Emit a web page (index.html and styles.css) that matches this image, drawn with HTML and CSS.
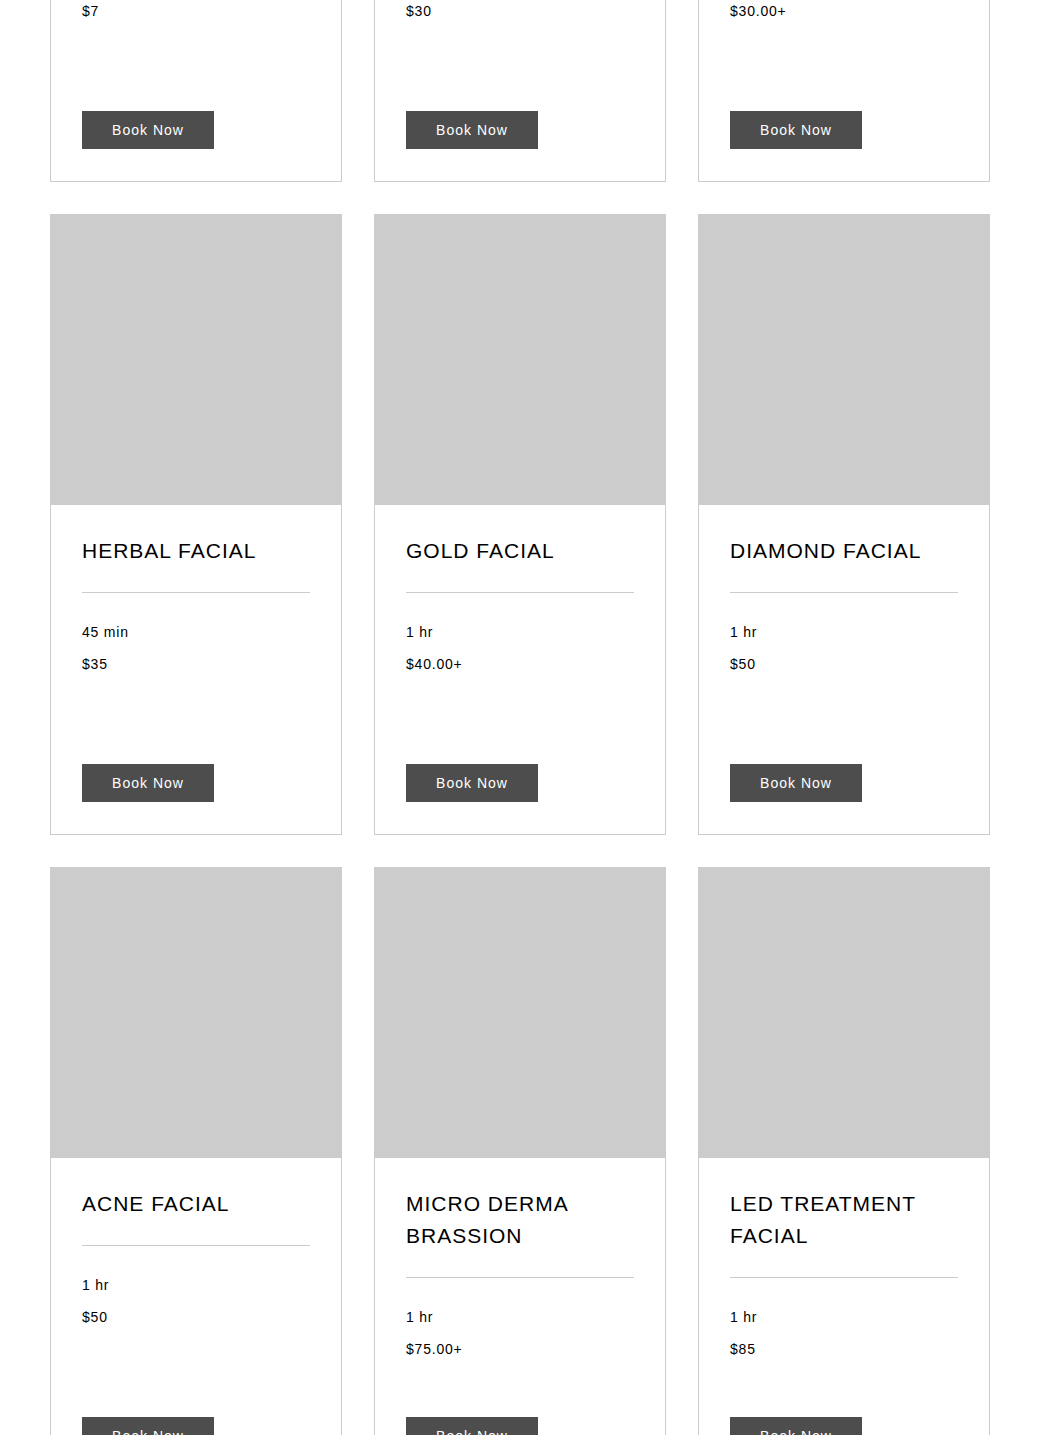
FILE: index.html
```html
<!DOCTYPE html>
<html lang="en">
<head>
    <meta charset="UTF-8">
    <meta name="viewport" content="width=device-width, initial-scale=1.0">
    <title>Our Services</title>
    <link rel="stylesheet" href="styles.css">
</head>
<body>
    <div class="service-list">
        <!-- row 1 (scrolled above the fold) -->
        <div class="service-card">
            <div class="service-image"></div>
            <div class="service-info">
                <h2 class="service-name">THREADING</h2>
                <hr class="divider">
                <p class="service-meta">15 min</p>
                <p class="service-meta">$7</p>
                <button class="book-btn">Book Now</button>
            </div>
        </div>
        <div class="service-card">
            <div class="service-image"></div>
            <div class="service-info">
                <h2 class="service-name">WAXING</h2>
                <hr class="divider">
                <p class="service-meta">30 min</p>
                <p class="service-meta">$30</p>
                <button class="book-btn">Book Now</button>
            </div>
        </div>
        <div class="service-card">
            <div class="service-image"></div>
            <div class="service-info">
                <h2 class="service-name">CLEAN UP</h2>
                <hr class="divider">
                <p class="service-meta">45 min</p>
                <p class="service-meta">$30.00+</p>
                <button class="book-btn">Book Now</button>
            </div>
        </div>

        <!-- row 2 -->
        <div class="service-card">
            <div class="service-image"></div>
            <div class="service-info">
                <h2 class="service-name">HERBAL FACIAL</h2>
                <hr class="divider">
                <p class="service-meta">45 min</p>
                <p class="service-meta">$35</p>
                <button class="book-btn">Book Now</button>
            </div>
        </div>
        <div class="service-card">
            <div class="service-image"></div>
            <div class="service-info">
                <h2 class="service-name">GOLD FACIAL</h2>
                <hr class="divider">
                <p class="service-meta">1 hr</p>
                <p class="service-meta">$40.00+</p>
                <button class="book-btn">Book Now</button>
            </div>
        </div>
        <div class="service-card">
            <div class="service-image"></div>
            <div class="service-info">
                <h2 class="service-name">DIAMOND FACIAL</h2>
                <hr class="divider">
                <p class="service-meta">1 hr</p>
                <p class="service-meta">$50</p>
                <button class="book-btn">Book Now</button>
            </div>
        </div>

        <!-- row 3 -->
        <div class="service-card">
            <div class="service-image"></div>
            <div class="service-info">
                <h2 class="service-name">ACNE FACIAL</h2>
                <hr class="divider">
                <p class="service-meta">1 hr</p>
                <p class="service-meta">$50</p>
                <button class="book-btn">Book Now</button>
            </div>
        </div>
        <div class="service-card">
            <div class="service-image"></div>
            <div class="service-info">
                <h2 class="service-name">MICRO DERMA BRASSION</h2>
                <hr class="divider">
                <p class="service-meta">1 hr</p>
                <p class="service-meta">$75.00+</p>
                <button class="book-btn">Book Now</button>
            </div>
        </div>
        <div class="service-card">
            <div class="service-image"></div>
            <div class="service-info">
                <h2 class="service-name">LED TREATMENT FACIAL</h2>
                <hr class="divider">
                <p class="service-meta">1 hr</p>
                <p class="service-meta">$85</p>
                <button class="book-btn">Book Now</button>
            </div>
        </div>
    </div>
</body>
</html>
```

FILE: styles.css
```css
html {
    overflow: hidden;
}

body {
    font-family: "Liberation Sans", Arial, sans-serif;
    background-color: #ffffff;
    color: #000000;
    margin: 0;
    padding: 0;
}

/* page is scrolled: first row sits partly above the viewport */
.service-list {
    display: grid;
    grid-template-columns: repeat(3, 292px);
    column-gap: 32px;
    row-gap: 32px;
    padding: 0 50px;
    margin-top: -439px;
}

.service-card {
    height: 621px;
    box-sizing: border-box;
    border: 1px solid #cccccc;
    display: flex;
    flex-direction: column;
}

.service-image {
    height: 291px;
    margin: -1px -1px 0;
    background-color: #cccccc;
}

.service-info {
    flex: 1;
    display: flex;
    flex-direction: column;
    align-items: flex-start;
    padding: 30px 31px 32px;
}

.service-name {
    margin: 0;
    font-size: 21px;
    font-weight: normal;
    line-height: 32px;
    letter-spacing: 1px;
}

.divider {
    width: 100%;
    margin: 25px 0 0;
    border: none;
    border-top: 1px solid #cccccc;
}

.service-meta {
    margin: 8px 0 0;
    font-size: 14px;
    line-height: 24px;
    letter-spacing: 0.8px;
}

.divider + .service-meta {
    margin-top: 27px;
}

.book-btn {
    margin-top: auto;
    width: 132px;
    height: 38px;
    background-color: #4d4d4d;
    color: #ffffff;
    border: none;
    font-family: inherit;
    font-size: 14px;
    letter-spacing: 1px;
    cursor: pointer;
}

.book-btn:hover {
    background-color: #333333;
}
```
